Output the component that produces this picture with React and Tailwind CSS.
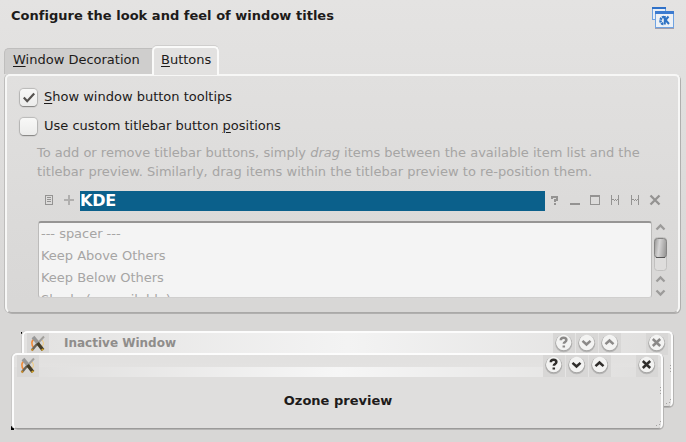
const glyphs = {
  help: <path d="M8.300 8.700C8.300 7 9.300 6.300 11 6.300s2.900.7 2.900 2.300c0 2-2.600 1.800-2.600 3.700M11.300 14v2" />,
  down: <path d="M7 9.300 11 13l4-3.700" />,
  up: <path d="M7 12.700 11 9l4 3.700" />,
  close: <path d="m7.300 7.500 7.400 7m0-7-7.400 7" />,
};

function AppIcon() {
  return (
    <svg className="h-[22px] w-[22px] shrink-0 bg-[#d8d7d6]" viewBox="0 0 22 22" fill="none">
      <path d="M8 6C4 7 4 12 7 15" stroke="#f28c3a" strokeWidth="1.600" />
      <path d="M15 7c2.500 3 1.500 6-1.500 7" stroke="#f6cb72" strokeWidth="1" />
      <path d="M17 3.500 10 11" stroke="#a19f9b" strokeWidth="2" />
      <path d="M10.500 10.500 5 17" stroke="#6b655a" strokeWidth="2.500" />
      <path d="m6 16-1.500 1.500" stroke="#c58a28" strokeWidth="2" />
      <path d="M6 4 11 10" stroke="#989898" strokeWidth="3.600" />
      <path d="m10.500 10 5.500 7" stroke="#453c25" strokeWidth="3.500" />
      <path d="m14.500 17.300 2-1.300" stroke="#d7a52a" strokeWidth="1.500" />
    </svg>
  );
}

function RoundButton({ kind, active }) {
  return (
    <svg className="h-[22px] w-[22px] shrink-0 bg-[#d8d7d6]" viewBox="0 0 22 22">
      <circle cx="10.700" cy="10.600" r="8.600" fill="#8f8e8d" opacity=".45" />
      <circle cx="10.700" cy="10.100" r="8.100" fill="#a5a4a3" />
      <circle cx="10.700" cy="9.500" r="7.700" fill="#f3f3f2" />
      <g transform="translate(-.5 -1.500)" fill="none" stroke={active ? "#2f2d2b" : "#8b8988"} strokeWidth="2.500">
        {glyphs[kind]}
      </g>
    </svg>
  );
}

function PreviewWindow({ title, active, className, children }) {
  return (
    <div className={"absolute h-[76px] w-[651px] rounded-[5px] border-2 border-b border-[#fcfcfc] border-b-[#9b9a99] bg-[#dfdedd] shadow-[1px_1px_0_#b5b4b3,-1px_0_0_#c9c8c7] " + className}>
      <div
        className={
          "flex h-[22px] items-center rounded-t pl-[3px] pr-[3px] " +
          (active
            ? "bg-[linear-gradient(#e1e0df_0,#e3e2e1_12px,transparent_12px),linear-gradient(90deg,#dfdedd,#f6f6f6_50%,#dfdedd)]"
            : "bg-[linear-gradient(90deg,#e3e2e1,#f3f3f3_50%,#dfdedd)]")
        }
      >
        <AppIcon />
        <span className="ml-[15px] mt-[-2px] flex-1 text-[12px] font-bold leading-[20px] text-[#8f8d8b]">{title}</span>
        <div className="flex gap-px">
          <RoundButton kind="help" active={active} />
          <RoundButton kind="down" active={active} />
          <RoundButton kind="up" active={active} />
        </div>
        <div className="ml-[25px] flex"><RoundButton kind="close" active={active} /></div>
      </div>
      {children}
      <svg className="absolute bottom-0 right-[-1px] h-[42px] w-2" viewBox="0 0 8 42" fill="#a3a2a1">
        <path d="M6 1h1v1H6zM6 4h1v1H6zM6 7h1v1H6zM6 35h1v1H6zM5 38h1v1H5zM2 39h1v1H2z" />
      </svg>
    </div>
  );
}

function Check({ checked, children }) {
  return (
    <label className="flex h-[29px] items-center gap-[7px]">
      <span className="mt-[2px] flex h-[17px] w-[17px] items-center justify-center rounded-[4px] bg-gradient-to-b from-[#f8f8f7] to-[#ececeb] shadow-[0_1px_1px_#858483,0_0_1px_1px_#b9b8b7]">
        {checked && (
          <svg className="h-[17px] w-[17px]" viewBox="0 0 17 17" fill="none" stroke="#55524f" strokeWidth="2.200">
            <path d="m3.800 8.500 3.400 3.700 7-7.700" />
          </svg>
        )}
      </span>
      <span>{children}</span>
    </label>
  );
}

function Tool({ children }) {
  return (
    <svg className="h-5 w-5 shrink-0" viewBox="0 2 20 20" fill="none" stroke="#949392" shapeRendering="crispEdges">
      {children}
    </svg>
  );
}

function Key({ children }) {
  return <span className="underline decoration-1 underline-offset-2">{children}</span>;
}

export default function App() {
  return (
    <div className="flex h-[442px] w-[686px] flex-col overflow-hidden bg-[#d8d7d6] bg-[linear-gradient(#e4e3e2,#d8d7d6_300px)] font-['DejaVu_Sans',sans-serif] text-[13px] leading-[19px] text-[#1d1b1a]">
      <header className="flex h-[46px] shrink-0 items-start justify-between pl-[11px] pr-3 pt-[6px]">
        <h1 className="font-bold tracking-[0.02px]">Configure the look and feel of window titles</h1>
        <svg className="mt-px h-[22px] w-[22px]" viewBox="0 0 22 22">
          <rect x=".5" y=".5" width="13" height="12" fill="#e8eef6" stroke="#6fa3e2" />
          <path d="M0 0h14v2H0z" fill="#2f71c8" />
          <rect x="3.500" y="4.500" width="18" height="16" fill="#edf1f6" stroke="#6fa3e2" />
          <path d="M3 4h19v3H3z" fill="#3c7bd0" />
          <path d="M3 21h19v1H3z" fill="#a29daa" />
          <path d="M12 10a3.500 3.500 0 1 0 0 7" fill="none" stroke="#2e72c4" strokeWidth="2.600" strokeDasharray="2 .6" />
          <path d="M12.800 9v8.500M16.500 9.500l-3 3.500 3.500 4" fill="none" stroke="#2e72c4" strokeWidth="2" />
        </svg>
      </header>

      <nav className="z-10 flex h-[29px] shrink-0 items-end pl-1">
        <div className="mb-[1px] h-[26px] w-[148px] rounded-tl-[5px] border-l border-t border-[#bfbebd] bg-[#cfcecd] pl-2 pt-px">
          <Key>W</Key>indow Decoration
        </div>
        <div className="h-[29px] w-[67px] rounded-t-[5px] border-2 border-b-0 border-[#fafaf9] bg-[#e2e1e0] pl-[7px] pt-[2px] shadow-[0_-1px_0_#cfcecd]">
          <Key>B</Key>uttons
        </div>
      </nav>

      <main className="ml-[5px] mt-[-1px] flex h-[239px] w-[675px] shrink-0 flex-col rounded-[5px] rounded-b-md border-2 border-b border-[#f7f7f6] border-b-[#aaa9a8] pl-[13px] pt-[6px] shadow-[1px_1px_0_#b0afae,-1px_0_0_#bebdbc]">
        <Check checked><Key>S</Key>how window button tooltips</Check>
        <Check>Use custom titlebar button <Key>p</Key>ositions</Check>
        <p className="ml-[17px] mt-[3px] whitespace-nowrap text-[#a6a5a4]">
          To add or remove titlebar buttons, simply <i>drag</i> items between the available item list and the<br />
          <span className="tracking-[0.03px]">titlebar preview. Similarly, drag items within the titlebar preview to re-position them.</span>
        </p>

        <div className="ml-[19px] mt-[10px] flex h-5 shrink-0">
          <Tool><path d="M6.500 6.500h7v9h-7zM8 8.500h4M8 10.500h4M8 12.500h4" /></Tool>
          <Tool><path d="M10 6v10M5 11h10" strokeWidth="2" stroke="#b0afae" /></Tool>
          <div className="ml-px w-[465px] bg-[#0b608b] text-[16px] font-bold leading-[19px] tracking-[-0.2px] text-white">KDE</div>
          <Tool><path d="M7 10V8h5v3h-2v2M9 15h2" strokeWidth="2" /></Tool>
          <Tool><path d="M5 15h10" strokeWidth="2" /></Tool>
          <Tool><path d="M5.500 6.500h9v9h-9zM5 7.500h10" /></Tool>
          <Tool><path d="M6.500 6v10M13.500 6v10M7 10.500h2M9 11.500h1M10 10.500h1M11 11.500h1M12 10.500h1" /></Tool>
          <Tool><path d="M6.500 6v10M13.500 6v10M7 10.500h2M9 11.500h1M10 10.500h1M11 11.500h1M12 10.500h1" /></Tool>
          <Tool><path d="m5.500 6.500 9 9m0-9-9 9" strokeWidth="2.300" shapeRendering="auto" /></Tool>
        </div>

        <div className="ml-[18px] mt-[10px] flex gap-[2px]">
          <ul className="h-[77px] w-[614px] overflow-hidden rounded-[3px] border border-[#bcbbba] border-b-[#d0cfce] border-t-2 border-t-[#969594] bg-[#f4f4f4] pl-[2px] leading-[22px] tracking-[-0.02px] text-[#a6a5a4]">
            <li>--- spacer ---</li>
            <li>Keep Above Others</li>
            <li>Keep Below Others</li>
            <li>Shade (unavailable)</li>
          </ul>
          <svg className="h-[77px] w-[14px]" viewBox="0 0 14 77" fill="none">
            <path d="m2.500 8.500 4-4 4 4M2.500 60.500l4-4 4 4M2.500 69.500l4 4 4-4" stroke="#9c9b9a" strokeWidth="2.300" />
            <rect x=".5" y="16.500" width="12" height="33" rx="3" fill="#dedddc" stroke="#c1c0bf" />
            <defs>
              <linearGradient id="thumb" x1="0" x2="1" y1=".5" y2=".7">
                <stop stopColor="#a3a2a1" />
                <stop offset=".35" stopColor="#d6d5d5" />
                <stop offset="1" stopColor="#949392" />
              </linearGradient>
            </defs>
            <rect x=".5" y="17.500" width="12" height="19" rx="3" fill="url(#thumb)" stroke="#858483" />
            <path d="M2 36.500h9" stroke="#555" />
          </svg>
        </div>
      </main>

      <section className="relative flex-1">
        <i className="absolute left-[21px] top-[19px] h-[2px] w-px bg-black" />
        <i className="absolute left-[11px] top-[113px] h-[4px] w-[3px] bg-black" />
        <PreviewWindow title="Inactive Window" className="left-[22px] top-[18px]" />
        <PreviewWindow active className="left-[12px] top-[40px]">
          <p className="ml-px mt-[14px] text-center font-bold">Ozone preview</p>
        </PreviewWindow>
      </section>
    </div>
  );
}
